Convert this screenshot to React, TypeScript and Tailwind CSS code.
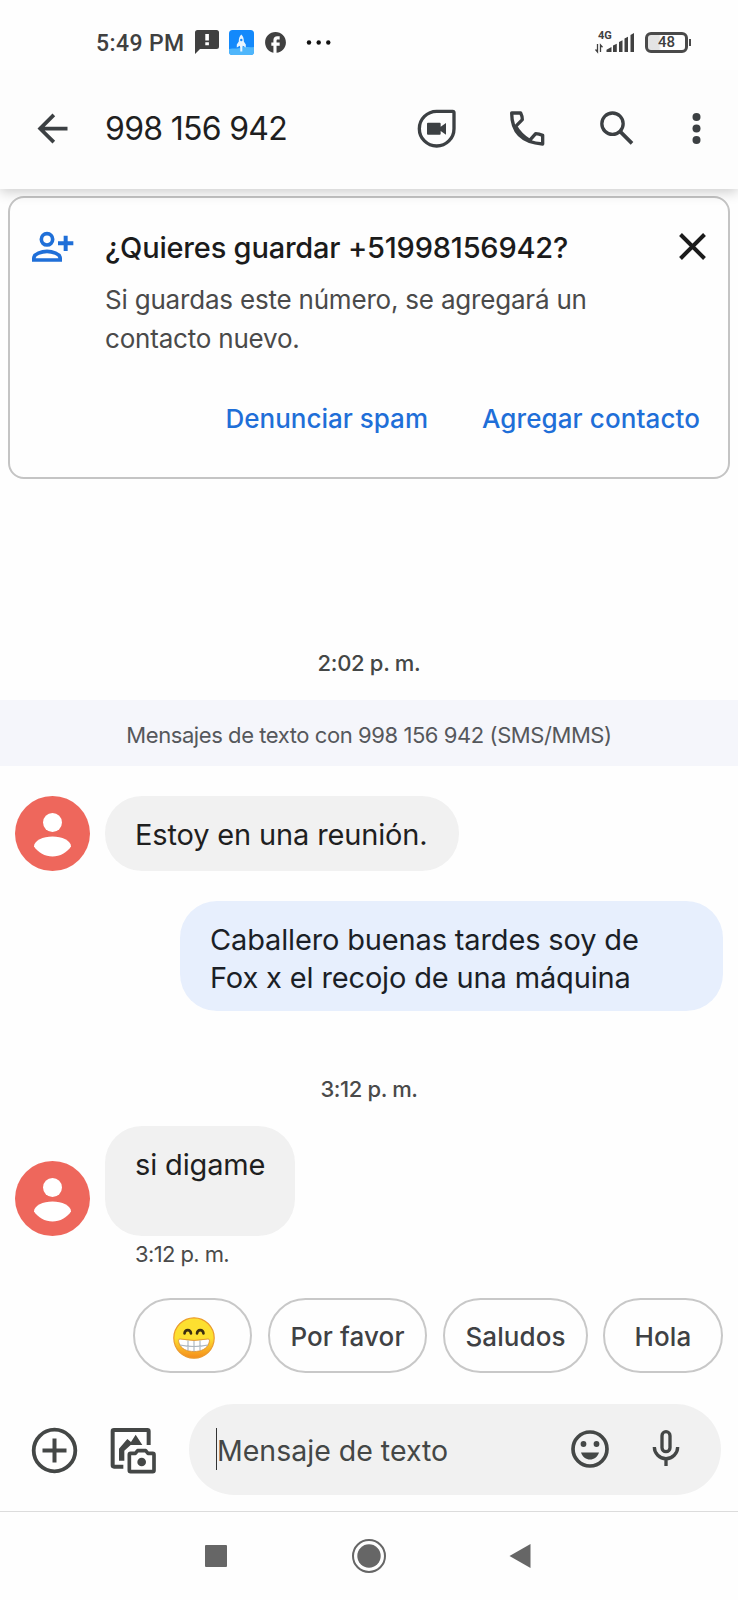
import type { ReactNode } from 'react'
import { MdFacebook, MdArrowBack } from 'react-icons/md'

const chips = [
  { label: 'Por favor', className: 'w-[159px] ml-4 tracking-[0.1px]' },
  { label: 'Saludos', className: 'w-[145px] ml-4 tracking-[0.1px]' },
  { label: 'Hola', className: 'w-[120px] ml-[15px] tracking-[0.1px]' },
]

function StatusBar() {
  return (
    <div className="h-[70px] flex items-start shrink-0 text-[#404040]">
      <span className="ml-[96px] mt-[30px] w-[99px] font-[Roboto] font-medium text-[23px] leading-7 tracking-[0.4px] whitespace-nowrap">
        5:49 PM
      </span>
      <svg className="mt-[29px] w-6 h-[25px]" viewBox="0 0 24 25">
        <path d="M2.500 1h19A2.500 2.500 0 0 1 24 3.500v14a2.500 2.500 0 0 1-2.500 2.500H5l-5 5V3.500A2.500 2.500 0 0 1 2.500 1z" fill="currentColor" />
        <path d="M10.300 5h3.600v6.500h-3.600zM10.300 13.200h3.600v3h-3.600z" fill="#fff" />
      </svg>
      <svg className="ml-[10px] mt-[30px] w-[25px] h-[25px]" viewBox="0 0 25 25">
        <rect width="25" height="25" rx="3.500" fill="#1389fb" />
        <path d="M0 19c5-1 7 0 11-1 5-2 9 0 14-1v4.500a3.500 3.500 0 0 1-3.500 3.500h-18A3.500 3.500 0 0 1 0 21.500z" fill="#4fb6fb" />
        <path d="M12.300 4.500c2 2 2.700 4.500 2.500 7l2 3v3l-3-1.700-.5 2.200v3.500h-2v-3.500l-.5-2.200-3 1.700v-3l2-3c-.2-2.500.5-5 2.500-7z" fill="#e8f5ff" />
        <circle cx="12.300" cy="10" r="1.200" fill="#1389fb" />
      </svg>
      <MdFacebook className="ml-[9px] mt-[30px] w-[25px] h-[25px]" />
      <svg className="ml-[17px] mt-[38px] w-7 h-2" viewBox="0 0 28 8" fill="#111">
        <circle cx="4" cy="4.500" r="2.200" />
        <circle cx="13.700" cy="4.500" r="2.200" />
        <circle cx="23.300" cy="4.500" r="2.200" />
      </svg>
      <div className="ml-auto mr-[11px] mt-[30px] w-10 h-6 relative">
        <span className="absolute left-[4px] top-0 font-[Roboto] font-bold text-[11px] leading-[11px]">4G</span>
        <svg className="absolute inset-0 w-10 h-6" viewBox="0 0 40 24">
          <path d="M3.500 14v8l-2-2.500M6.500 22v-7l2 2.300" fill="none" stroke="currentColor" strokeWidth="1.300" />
          <path d="M12.500 22v-2.300l5-2.700v5zM19 22v-6.500l3.800-1.800V22zM25 22V12l3.500-1.800V22zM30.500 22V8.500l3.500-1.800V22zM36.500 22V5l3.500-2v19z" fill="currentColor" />
        </svg>
      </div>
      <div className="mr-[47px] mt-[32px] flex items-center">
        <div className="w-[43px] h-[21px] rounded-[6px] border-[3px] border-[#4a4a4a] bg-linear-to-r from-[#e4e4e4] from-30% to-white to-35% flex items-center justify-center font-[Roboto] font-medium text-[15px] leading-none">
          48
        </div>
        <div className="ml-px w-[2px] h-[7px] bg-[#4a4a4a]" />
      </div>
    </div>
  )
}

function Header() {
  return (
    <header className="h-[119px] shrink-0 flex items-start bg-[#fdfdfd] text-[#3c4043] relative shadow-[0_3px_12px_rgba(0,0,0,0.2)] [clip-path:inset(0_0_-20px_0)]">
      <MdArrowBack className="ml-[30px] mt-[36px] w-[45px] h-[45px]" />
      <h1 className="ml-[30px] mt-[39px] w-[313px] text-[32px] leading-10 text-[#1f1f1f] tracking-[-0.7px] whitespace-nowrap">
        998 156 942
      </h1>
      {/* viewBoxes below are three units per pixel */}
      <svg className="-ml-px mt-[39px] w-10 h-10" viewBox="144 87 120 120">
        <path d="M203 94h48q4 0 4 4v48a52 52 0 1 1-52-52z" fill="none" stroke="currentColor" strokeWidth="10" />
        <path d="M177 128h35q3 0 3 3v9l16-11v35l-16-11v8q0 3-3 3h-35q-3 0-3-3v-30q0-3 3-3z" fill="currentColor" />
      </svg>
      <svg className="ml-[50px] mt-[39px] w-10 h-10" viewBox="414 87 120 120">
        <path
          d="M428 99h27q6 12 5 20l-20 20q14 26 42 42l18-20q10 1 21 5v26q-93-7-93-93zM440 139M482 181"
          fill="none"
          stroke="currentColor"
          strokeWidth="10"
          strokeLinejoin="round"
        />
      </svg>
      <svg className="ml-[49px] mt-[39px] w-10 h-10" viewBox="681 87 120 120" fill="none" stroke="currentColor">
        <circle cx="730.500" cy="131" r="32" strokeWidth="10" />
        <path d="M753 154l36 36" strokeWidth="11" />
      </svg>
      <svg className="ml-[50px] mt-[39px] w-[30px] h-10" viewBox="0 0 30 40" fill="currentColor">
        <circle cx="10.500" cy="8" r="4" />
        <circle cx="10.500" cy="19.500" r="4" />
        <circle cx="10.500" cy="31" r="4" />
      </svg>
    </header>
  )
}

function SaveContactCard() {
  return (
    <section className="ml-2 mt-[7px] w-[722px] h-[283px] shrink-0 rounded-2xl border-2 border-[#c4c4c4] flex flex-col">
      <div className="flex">
        <svg className="ml-[21px] mt-[32px] w-[44px] h-[34px] text-[#1f6fd8]" viewBox="93 120 132 102" fill="none" stroke="currentColor">
          <circle cx="141" cy="148" r="17" strokeWidth="11" />
          <path d="M101.500 210v-6c0-12 24-20 39.500-20s39.500 8 39.500 20v6z" strokeWidth="11" />
          <path d="M174 159.500h46M197 137v46" strokeWidth="12" />
        </svg>
        <div className="ml-[30px] mt-[30px] w-[541px] whitespace-nowrap">
          <h2 className="font-medium text-[29px] leading-10 text-[#1b1b1b] tracking-[-0.2px]">¿Quieres guardar +51998156942?</h2>
          <p className="mt-[12px] text-[26px] leading-[39px] text-[#4a4a4a] tracking-[-0.2px]">
            Si guardas este número, se agregará un
            <br />
            contacto nuevo.
          </p>
        </div>
        <svg className="ml-[31px] mt-[33px] w-[30px] h-[30px]" viewBox="0 0 30 30">
          <path d="M3.500 3.500l24 24M27.500 3.500l-24 24" stroke="#1b1b1b" strokeWidth="4" />
        </svg>
      </div>
      <div className="mt-[41px] mr-7 flex justify-end gap-[54px] font-medium text-[26px] leading-10 text-[#1f6fd8] whitespace-nowrap">
        <button>Denunciar spam</button>
        <button className="tracking-[0.1px]">Agregar contacto</button>
      </div>
    </section>
  )
}

function Avatar() {
  return (
    <svg className="ml-[15px] w-[75px] h-[75px] shrink-0" viewBox="0 0 75 75">
      <circle cx="37.500" cy="37.500" r="37.500" fill="#ee675c" />
      <circle cx="37.500" cy="26.500" r="9.500" fill="#fff" />
      <path d="M37.500 40.500c9.500 0 18.500 4 18.500 10-4 6-11 10-18.500 10s-14.500-4-18.500-10c0-6 9-10 18.500-10z" fill="#fff" />
    </svg>
  )
}

function Received({ className, children }: { className: string; children: ReactNode }) {
  return (
    <div className="flex items-end shrink-0">
      <Avatar />
      <div
        className={`ml-[15px] pl-[30px] pt-5 rounded-[37px] bg-[#f1f1f1] text-[29px] leading-[38px] text-[#1f1f1f] tracking-[-0.15px] whitespace-nowrap ${className}`}
      >
        {children}
      </div>
    </div>
  )
}

function Grin() {
  return (
    <svg className="ml-[2px] w-[42px] h-[42px]" viewBox="0 0 42 42">
      <defs>
        <linearGradient id="face" x1="0" y1="0" x2="0" y2="1">
          <stop offset="0.500" stopColor="#fde030" />
          <stop offset="1" stopColor="#f58b1b" />
        </linearGradient>
      </defs>
      <circle cx="21" cy="21" r="20.200" fill="url(#face)" stroke="#eb9b2d" strokeWidth="1.200" />
      <path d="M11.500 16.500c.5-4.500 6-4.500 6.500 0M24 16.500c.5-4.500 6-4.500 6.500 0" fill="none" stroke="#3a2d10" strokeWidth="2.600" strokeLinecap="round" />
      <path d="M7 22q14 3 28 0c2 0 1.500 2 1 4-2 6-8 8.500-15 8.500S8 32 6 26c-.5-2-1-4 1-4z" fill="#fff" stroke="#d98a2b" strokeWidth="0.800" />
      <path d="M7 28q14 3 28 0M15 23.500v10M21 24v10.500M27 23.500v10" fill="none" stroke="#a9b4bd" strokeWidth="1.100" />
    </svg>
  )
}

function Composer() {
  return (
    <div className="mt-[31px] h-[91px] shrink-0 flex items-center text-[#444746]">
      <svg className="ml-[31px] mt-[2px] w-[47px] h-[47px]" viewBox="0 0 47 47" fill="none" stroke="currentColor">
        <circle cx="23.500" cy="23.500" r="20.800" strokeWidth="3.800" />
        <path d="M11.500 23.500h24M23.500 11.500v24" strokeWidth="4" />
      </svg>
      <svg className="ml-[32px] mt-[2px] w-[48px] h-[48px]" viewBox="330 111 144 144">
        <path d="M446 165v-41q0-4-4-4H342q-4 0-4 4v102q0 4 4 4h28" fill="none" stroke="currentColor" strokeWidth="12" />
        <path d="M357 212v-36l25-29 11 9 14-22 20 31h-35l-19 17v30z" fill="currentColor" />
        <path d="M392 190h14l7-8h24l7 8h14q4 0 4 4v47q0 4-4 4h-66q-4 0-4-4v-47q0-4 4-4z" fill="none" stroke="currentColor" strokeWidth="11" strokeLinejoin="round" />
        <circle cx="425" cy="216" r="13" fill="currentColor" />
      </svg>
      <div className="ml-[31px] w-[532px] h-[91px] rounded-full bg-[#f1f1f1] flex items-center">
        <div className="ml-[27px] -mt-px w-px h-[42px] bg-[#333]" />
        <span className="w-[354px] pt-[3px] text-[28.500px] leading-10 whitespace-nowrap">Mensaje de texto</span>
        <svg className="-mt-px w-[38px] h-[38px]" viewBox="0 0 38 38" fill="currentColor">
          <circle cx="19" cy="19" r="17" fill="none" stroke="currentColor" strokeWidth="3.700" />
          <circle cx="12.500" cy="14" r="2.900" />
          <circle cx="25.500" cy="14" r="2.900" />
          <path d="M10 22.500h18c-1.500 4.500-5 7-9 7s-7.500-2.500-9-7z" />
        </svg>
        <svg className="ml-[42px] -mt-[3px] w-[30px] h-[38px]" viewBox="847 117 90 114" fill="none" stroke="currentColor">
          <rect x="880" y="125" width="24" height="60" rx="12" strokeWidth="10" />
          <path d="M857 171a35 35 0 0 0 70 0M892 205v23" strokeWidth="10" />
        </svg>
      </div>
    </div>
  )
}

function NavBar() {
  return (
    <nav className="mt-4 h-[89px] shrink-0 border-t border-[#dcdcdc] flex items-center text-[#666]">
      <div className="ml-[205px] w-[22px] h-[22px] rounded-[1px] bg-[#666]" />
      <svg className="ml-[124px] w-9 h-9" viewBox="0 0 36 36">
        <circle cx="18" cy="18" r="16" fill="none" stroke="currentColor" strokeWidth="2" />
        <circle cx="18" cy="18" r="11.700" fill="currentColor" />
      </svg>
      <svg className="ml-[122px] w-[22px] h-[26px]" viewBox="0 0 22 26">
        <path d="M21.500 1v24L0.500 13z" fill="currentColor" />
      </svg>
    </nav>
  )
}

export default function App() {
  return (
    <div className="w-[738px] h-[1600px] overflow-hidden bg-[#fefefe] flex flex-col font-[Inter,sans-serif]">
      <StatusBar />
      <Header />
      <SaveContactCard />
      <time className="mt-[168px] h-[32px] shrink-0 text-center font-medium text-[22px] leading-8 text-[#444746] tracking-[-0.3px]">
        2:02 p. m.
      </time>
      <div className="mt-[21px] h-[66px] shrink-0 bg-[#f5f6fb] text-center text-[22px] leading-[70px] text-[#55585c] tracking-[-0.43px]">
        Mensajes de texto con 998 156 942 (SMS/MMS)
      </div>
      <main className="mt-[30px] flex flex-col shrink-0">
        <Received className="w-[354px] h-[75px]">Estoy en una reunión.</Received>
        <div className="mt-[30px] ml-[180px] pl-[30px] pt-5 w-[543px] h-[110px] rounded-[37px] bg-[#e7effd] text-[29px] leading-[38px] text-[#1b1f27] tracking-[-0.15px] whitespace-nowrap">
          Caballero buenas tardes soy de
          <br />
          Fox x el recojo de una máquina
        </div>
        <time className="mt-[62px] h-8 text-center font-medium text-[22px] leading-8 text-[#4a4a4a] tracking-[-0.4px]">3:12 p. m.</time>
        <div className="mt-[21px]">
          <Received className="w-[190px] h-[110px]">si digame</Received>
        </div>
        <time className="ml-[135px] mt-[2px] h-8 text-[22px] leading-8 text-[#4a4a4a] tracking-[-0.6px]">3:12 p. m.</time>
      </main>
      <div className="mt-[28px] ml-[133px] flex shrink-0 text-[#3f4144]">
        <button className="w-[119px] h-[75px] rounded-full border-2 border-[#c8c8c8] flex items-center justify-center pt-1">
          <Grin />
        </button>
        {chips.map((chip) => (
          <button
            key={chip.label}
            className={`h-[75px] rounded-full border-2 border-[#c8c8c8] pt-[2px] font-medium text-[26px] whitespace-nowrap ${chip.className}`}
          >
            {chip.label}
          </button>
        ))}
      </div>
      <Composer />
      <NavBar />
    </div>
  )
}
